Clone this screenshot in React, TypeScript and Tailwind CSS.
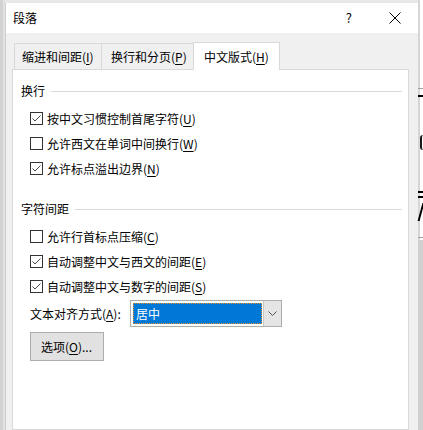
import type { ReactNode } from "react";

const FONT = "font-['Microsoft_YaHei_UI','Noto_Sans_CJK_SC',sans-serif]";

type Option = {
  label: string;
  key: string;
  checked: boolean;
};

const lineBreakOptions: Option[] = [
  { label: "按中文习惯控制首尾字符", key: "U", checked: true },
  { label: "允许西文在单词中间换行", key: "W", checked: false },
  { label: "允许标点溢出边界", key: "N", checked: true },
];

const spacingOptions: Option[] = [
  { label: "允许行首标点压缩", key: "C", checked: false },
  { label: "自动调整中文与西文的间距", key: "E", checked: true },
  { label: "自动调整中文与数字的间距", key: "S", checked: true },
];

function AccessKey({ children }: { children: ReactNode }) {
  return <span className="underline underline-offset-2 decoration-1">{children}</span>;
}

function Checkbox({ checked }: { checked: boolean }) {
  return (
    <span className="flex h-[13px] w-[13px] shrink-0 items-center justify-center border border-[#333333] bg-white">
      {checked && (
        <svg width="11" height="11" viewBox="0 0 11 11">
          <polyline points="1.5,5.5 4,8 9.5,2.5" fill="none" stroke="#4a4a4a" strokeWidth="1" />
        </svg>
      )}
    </span>
  );
}

function CheckRow({ option }: { option: Option }) {
  return (
    <div className="flex h-[25px] items-center gap-[4px] pl-[17px]">
      <Checkbox checked={option.checked} />
      <span className="leading-[16px]">
        {option.label}(<AccessKey>{option.key}</AccessKey>)
      </span>
    </div>
  );
}

function SectionHeader({ title }: { title: string }) {
  return (
    <div className="flex h-[16px] items-center gap-[6px] pl-[8px] pr-[6px]">
      <span className="leading-[16px]">{title}</span>
      <span className="h-px flex-1 bg-[#dadada]" />
    </div>
  );
}

function Tab({ children, active, className }: { children: ReactNode; active?: boolean; className: string }) {
  if (active) {
    return (
      <div
        className={`relative z-10 -mb-px flex h-[28px] items-center border border-b-0 border-[#d9d9d9] bg-white ${className}`}
      >
        {children}
      </div>
    );
  }

  return (
    <div className={`flex h-[26px] items-center border border-b-0 border-[#d9d9d9] bg-[#f0f0f0] ${className}`}>
      {children}
    </div>
  );
}

export default function App() {
  return (
    <div className={`flex h-[430px] w-[423px] overflow-hidden bg-white text-[12px] text-black ${FONT}`}>
      {/* window behind, left edge */}
      <div className="flex h-full w-[5px] shrink-0">
        <div className="h-full w-[3px] bg-[#d2d2d2]" />
        <div className="h-full w-[2px] bg-[#e2e2e2]" />
      </div>

      {/* dialog */}
      <div className="flex h-full w-[413px] shrink-0 flex-col bg-[#e8e8e8] pt-[3px]">
        <div className="flex flex-1 flex-col border-l border-[#cfcfcf] bg-[#f0f0f0]">
          {/* title bar */}
          <div className="flex h-[30px] items-center bg-white pl-[7px]">
            <span className="leading-[16px]">段落</span>
            <span className="ml-auto mr-[37px] text-[13px] leading-[16px]">?</span>
            <svg className="mr-[17px]" width="12" height="12" viewBox="0 0 12 12">
              <path d="M0.5 0.5 L11.5 11.5 M11.5 0.5 L0.5 11.5" stroke="#000" strokeWidth="1" />
            </svg>
          </div>

          {/* tabs */}
          <div className="mt-[9px] flex items-end pl-[8px]">
            <Tab className="w-[88px] pl-[7px]">
              缩进和间距(<AccessKey>I</AccessKey>)
            </Tab>
            <Tab className="-ml-px w-[93px] pl-[9px]">
              换行和分页(<AccessKey>P</AccessKey>)
            </Tab>
            <Tab active className="-ml-px w-[87px] pl-[10px]">
              中文版式(<AccessKey>H</AccessKey>)
            </Tab>
          </div>

          {/* panel */}
          <div className="ml-[6px] w-[397px] flex-1 border border-[#d9d9d9] bg-white pt-[13px]">
            <SectionHeader title="换行" />
            <div className="mt-[7px]">
              {lineBreakOptions.map((option) => (
                <CheckRow key={option.key} option={option} />
              ))}
            </div>

            <div className="mt-[20px]">
              <SectionHeader title="字符间距" />
            </div>
            <div className="mt-[7px]">
              {spacingOptions.map((option) => (
                <CheckRow key={option.key} option={option} />
              ))}
            </div>

            <div className="mt-[1px] flex items-center pl-[17px]">
              <span className="w-[100px] leading-[16px]">
                文本对齐方式(<AccessKey>A</AccessKey>):
              </span>
              <div className="flex h-[27px] w-[152px] border border-[#adadad] bg-white">
                <div className="flex flex-1 p-[2px] pr-[1px]">
                  <div className="flex flex-1 items-center border border-dotted border-[#e8902a] bg-[#0078d7] pl-[2px] text-white">
                    居中
                  </div>
                </div>
                <div className="flex w-[18px] items-center justify-center border-l border-[#c8c8c8] bg-[#e5e5e5]">
                  <svg width="9" height="5" viewBox="0 0 9 5">
                    <polyline points="0.5,0.5 4.5,4.5 8.5,0.5" fill="none" stroke="#555" strokeWidth="1" />
                  </svg>
                </div>
              </div>
            </div>

            <div className="mt-[5px] pl-[17px]">
              <button className="flex h-[29px] w-[74px] items-center border border-[#adadad] bg-[#e1e1e1] pl-[10px] text-[12px]">
                选项(<AccessKey>O</AccessKey>)...
              </button>
            </div>
          </div>
        </div>
      </div>

      {/* document behind, right edge */}
      <div className="relative h-full w-[5px] shrink-0 bg-white">
        <div className="absolute left-0 top-0 h-full w-[2px] bg-[#d6d6d6]" />
        <div className="absolute left-0 top-[240px] h-[190px] w-[5px] bg-[#d0d0d0]" />
        <div className="absolute left-0 top-[88px] h-px w-[5px] border-t border-dashed border-[#a0a0a0]" />
        <div className="absolute left-0 top-[95px] h-[2px] w-[5px] bg-black" />
        <div className="absolute left-[2px] top-[135px] h-[15px] w-[3px] rounded-l-full border-l-2 border-[#1a1a1a]" />
        <div className="absolute left-0 top-[191px] h-[2px] w-[5px] bg-black" />
        <div className="absolute left-0 top-[196px] h-[2px] w-[5px] bg-black" />
        <div className="absolute left-[2px] top-[203px] h-[18px] w-[2px] skew-x-[-15deg] bg-black" />
        <div className="absolute left-0 top-[237px] h-px w-[5px] border-t border-dashed border-[#a0a0a0]" />
      </div>
    </div>
  );
}
